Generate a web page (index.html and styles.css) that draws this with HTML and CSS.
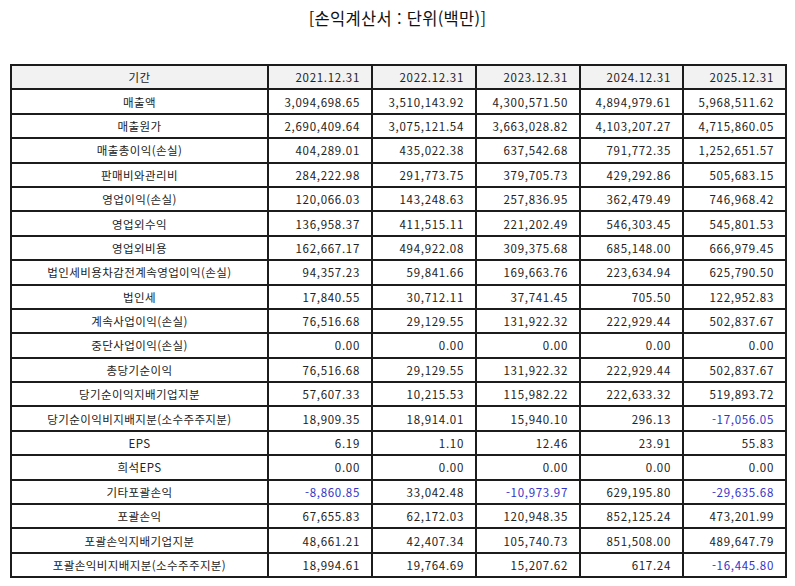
FILE: index.html
```html
<!DOCTYPE html>
<html lang="ko">
<head>
<meta charset="utf-8">
<link rel="stylesheet" href="styles.css">
</head>
<body>
<div class="page">
  <h1 class="title">[손익계산서 : 단위(백만)]</h1>
  <table class="fin">
    <colgroup>
      <col class="c-label"><col class="c-num"><col class="c-num"><col class="c-num"><col class="c-num2"><col class="c-num2">
    </colgroup>
    <thead>
      <tr><th>기간</th><th>2021.12.31</th><th>2022.12.31</th><th>2023.12.31</th><th>2024.12.31</th><th>2025.12.31</th></tr>
    </thead>
    <tbody>
      <tr><td>매출액</td><td>3,094,698.65</td><td>3,510,143.92</td><td>4,300,571.50</td><td>4,894,979.61</td><td>5,968,511.62</td></tr>
      <tr><td>매출원가</td><td>2,690,409.64</td><td>3,075,121.54</td><td>3,663,028.82</td><td>4,103,207.27</td><td>4,715,860.05</td></tr>
      <tr><td>매출총이익(손실)</td><td>404,289.01</td><td>435,022.38</td><td>637,542.68</td><td>791,772.35</td><td>1,252,651.57</td></tr>
      <tr><td>판매비와관리비</td><td>284,222.98</td><td>291,773.75</td><td>379,705.73</td><td>429,292.86</td><td>505,683.15</td></tr>
      <tr><td>영업이익(손실)</td><td>120,066.03</td><td>143,248.63</td><td>257,836.95</td><td>362,479.49</td><td>746,968.42</td></tr>
      <tr><td>영업외수익</td><td>136,958.37</td><td>411,515.11</td><td>221,202.49</td><td>546,303.45</td><td>545,801.53</td></tr>
      <tr><td>영업외비용</td><td>162,667.17</td><td>494,922.08</td><td>309,375.68</td><td>685,148.00</td><td>666,979.45</td></tr>
      <tr><td>법인세비용차감전계속영업이익(손실)</td><td>94,357.23</td><td>59,841.66</td><td>169,663.76</td><td>223,634.94</td><td>625,790.50</td></tr>
      <tr><td>법인세</td><td>17,840.55</td><td>30,712.11</td><td>37,741.45</td><td>705.50</td><td>122,952.83</td></tr>
      <tr><td>계속사업이익(손실)</td><td>76,516.68</td><td>29,129.55</td><td>131,922.32</td><td>222,929.44</td><td>502,837.67</td></tr>
      <tr><td>중단사업이익(손실)</td><td>0.00</td><td>0.00</td><td>0.00</td><td>0.00</td><td>0.00</td></tr>
      <tr><td>총당기순이익</td><td>76,516.68</td><td>29,129.55</td><td>131,922.32</td><td>222,929.44</td><td>502,837.67</td></tr>
      <tr><td>당기순이익지배기업지분</td><td>57,607.33</td><td>10,215.53</td><td>115,982.22</td><td>222,633.32</td><td>519,893.72</td></tr>
      <tr><td>당기순이익비지배지분(소수주주지분)</td><td>18,909.35</td><td>18,914.01</td><td>15,940.10</td><td>296.13</td><td class="neg">-17,056.05</td></tr>
      <tr><td>EPS</td><td>6.19</td><td>1.10</td><td>12.46</td><td>23.91</td><td>55.83</td></tr>
      <tr><td>희석EPS</td><td>0.00</td><td>0.00</td><td>0.00</td><td>0.00</td><td>0.00</td></tr>
      <tr><td>기타포괄손익</td><td class="neg">-8,860.85</td><td>33,042.48</td><td class="neg">-10,973.97</td><td>629,195.80</td><td class="neg">-29,635.68</td></tr>
      <tr><td>포괄손익</td><td>67,655.83</td><td>62,172.03</td><td>120,948.35</td><td>852,125.24</td><td>473,201.99</td></tr>
      <tr><td>포괄손익지배기업지분</td><td>48,661.21</td><td>42,407.34</td><td>105,740.73</td><td>851,508.00</td><td>489,647.79</td></tr>
      <tr><td>포괄손익비지배지분(소수주주지분)</td><td>18,994.61</td><td>19,764.69</td><td>15,207.62</td><td>617.24</td><td class="neg">-16,445.80</td></tr>
    </tbody>
  </table>
</div>
</body>
</html>
```
FILE: styles.css
```css
html, body {
  margin: 0;
  padding: 0;
  background: #ffffff;
}
.page {
  padding: 7px 10px 0 10px;
  font-family: "Noto Sans CJK KR", "Noto Sans", sans-serif;
  color: #222;
}
.title {
  margin: 0 0 35px 0;
  text-align: center;
  font-size: 16.5px;
  font-weight: 400;
  line-height: 22px;
  letter-spacing: 0.3px;
  color: #111;
}
.fin {
  width: 775px;
  border-collapse: collapse;
  table-layout: fixed;
  font-size: 11.5px;
  letter-spacing: 0.7px;
}
.c-label { width: 257px; }
.c-num { width: 104px; }
.c-num2 { width: 103px; }
.fin th, .fin td {
  border: 2px solid #1c1c1c;
  height: 24.4px;
  padding: 0 11px 0 4px;
  box-sizing: border-box;
  font-weight: 400;
  line-height: 14px;
  text-align: right;
  white-space: nowrap;
}
.fin th {
  background: #f2f2f2;
}
.fin th:first-child, .fin td:first-child {
  text-align: center;
  padding: 0 4px;
  letter-spacing: 0.4px;
}
.fin .neg {
  color: #3434c8;
}
```
